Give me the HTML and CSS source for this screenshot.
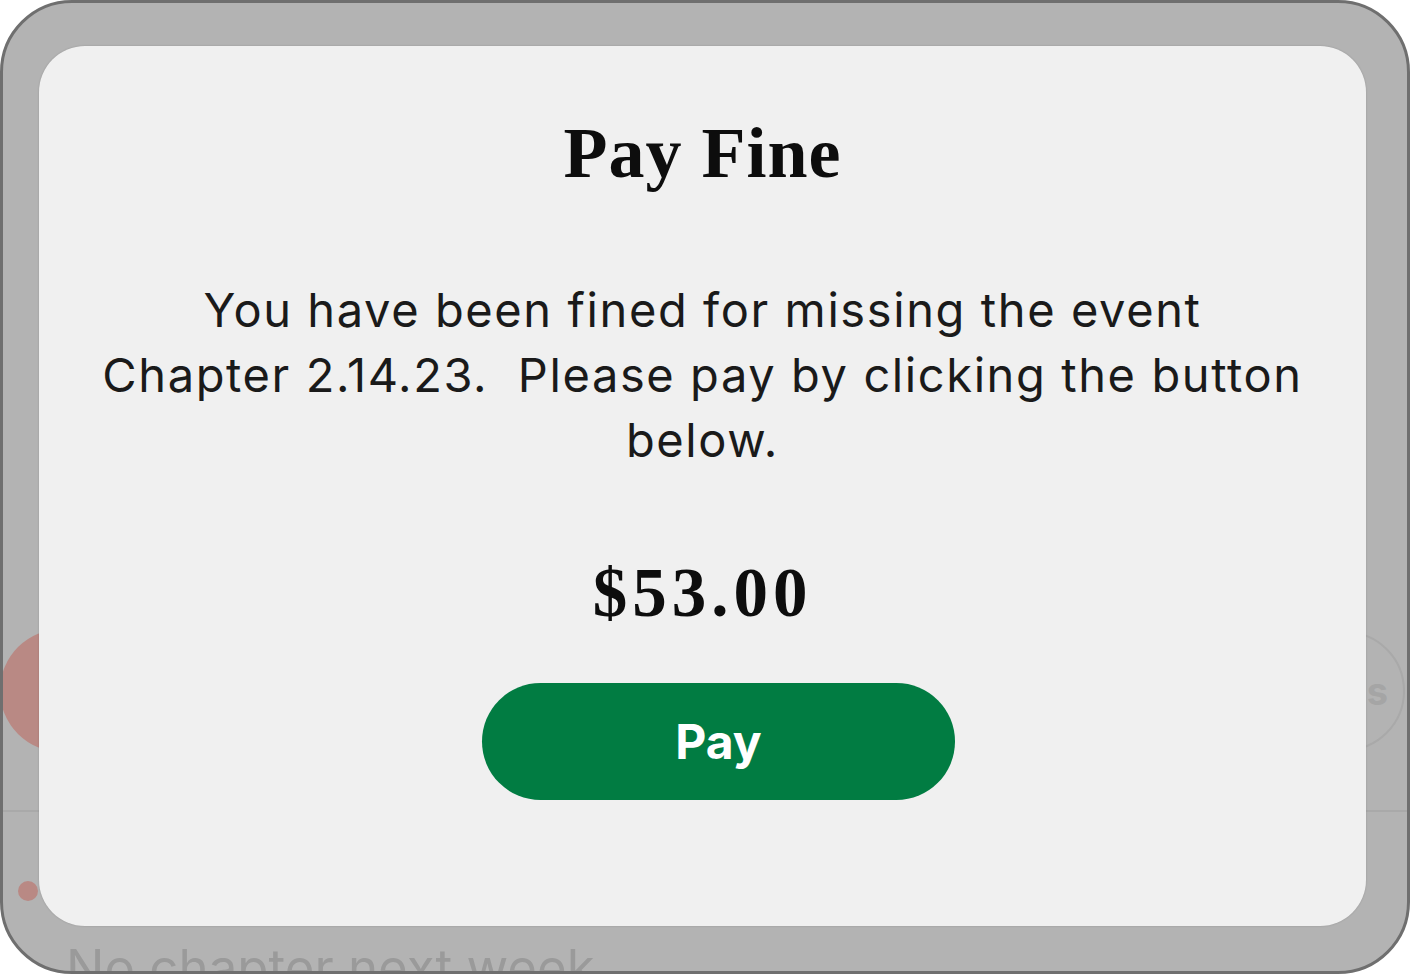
FILE: index.html
```html
<!DOCTYPE html>
<html lang="en">
<head>
<meta charset="utf-8">
<title>Pay Fine</title>
<link rel="stylesheet" href="styles.css">
</head>
<body>
<div class="frame">
  <div class="app">
    <div class="app-row">
      <div class="avatar-red"></div>
      <div class="pill-outline">Dues</div>
    </div>
    <div class="divider"></div>
    <div class="app-item">
      <span class="dot-red"></span>
    </div>
    <div class="app-text">No chapter next week</div>
  </div>
  <div class="modal">
    <h1 class="modal-title">Pay Fine</h1>
    <p class="modal-text">You have been fined for missing the event<br>Chapter 2.14.23.&nbsp; Please pay by clicking the button<br>below.</p>
    <div class="modal-amount">$53.00</div>
    <button class="pay-btn" type="button">Pay</button>
  </div>
</div>
</body>
</html>
```

FILE: styles.css
```css
html, body {
  margin: 0;
  padding: 0;
  background: #ffffff;
}

.frame {
  position: relative;
  width: 1410px;
  height: 974px;
  box-sizing: border-box;
  border: 3px solid #6f6f6f;
  border-radius: 72px;
  background: #b3b3b3;
  overflow: hidden;
  font-family: "Inter", "Liberation Sans", sans-serif;
}

.app {
  display: flex;
  flex-direction: column;
  padding-top: 626px;
}

.app-row {
  display: flex;
  justify-content: space-between;
  align-items: center;
  height: 123px;
}

.avatar-red {
  width: 123px;
  height: 123px;
  margin-left: -3px;
  border-radius: 50%;
  background: #b98984;
}

.pill-outline {
  box-sizing: border-box;
  width: 200px;
  height: 120px;
  margin-right: 2px;
  border: 2px solid #a9a9a9;
  border-radius: 60px;
  display: flex;
  align-items: center;
  justify-content: flex-end;
  padding-right: 15px;
  font-size: 38px;
  font-weight: 700;
  color: #a5a5a5;
}

.divider {
  height: 2px;
  margin-top: 58px;
  background: #a9a9a9;
}

.app-item {
  display: flex;
  padding: 69px 0 0 15px;
}

.dot-red {
  width: 20px;
  height: 20px;
  border-radius: 50%;
  background: #b98984;
}

.app-text {
  margin: 37px 0 0 63px;
  font-size: 51px;
  line-height: 60px;
  color: #9a9a9a;
  white-space: nowrap;
}

.modal {
  position: absolute;
  left: 36px;
  top: 43px;
  width: 1327px;
  height: 880px;
  box-sizing: border-box;
  padding-top: 67px;
  border-radius: 46px;
  background: #f0f0f0;
  box-shadow: 0 0 2px rgba(0, 0, 0, 0.18);
  display: flex;
  flex-direction: column;
  align-items: center;
}

.modal-title {
  margin: 0;
  font-family: "Liberation Serif", serif;
  font-weight: 700;
  font-size: 72px;
  line-height: 80px;
  letter-spacing: 1px;
  color: #0d0d0d;
}

.modal-text {
  margin: 84px 0 0;
  font-size: 47px;
  line-height: 65px;
  letter-spacing: 1.6px;
  text-align: center;
  color: #1a1a1a;
  white-space: nowrap;
}

.modal-amount {
  margin-top: 81px;
  font-family: "Liberation Serif", serif;
  font-weight: 700;
  font-size: 69px;
  line-height: 80px;
  letter-spacing: 5px;
  color: #0d0d0d;
}

.pay-btn {
  margin: 50px 0 0 32px;
  width: 473px;
  height: 117px;
  border: none;
  border-radius: 59px;
  background: #017c42;
  color: #ffffff;
  font-family: "Inter", "Liberation Sans", sans-serif;
  font-weight: 700;
  font-size: 48px;
  padding: 0;
  cursor: pointer;
}
```
